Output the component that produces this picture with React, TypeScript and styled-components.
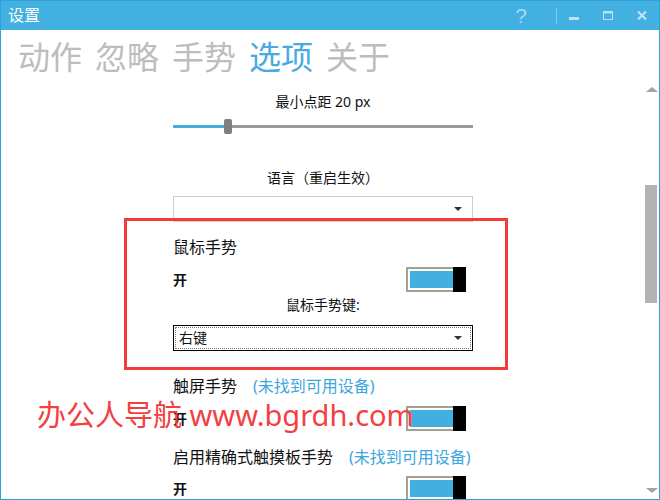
import styled, { createGlobalStyle } from 'styled-components'

const GlobalStyle = createGlobalStyle`
  html, body {
    margin: 0;
    padding: 0;
    background: #ffffff;
  }
  body {
    font-family: "Noto Sans", "Noto Sans CJK SC", sans-serif;
    color: #111;
  }
`

const Window = styled.div`
  position: relative;
  width: 660px;
  height: 500px;
  box-sizing: border-box;
  border: 1px solid #2fa2da;
  display: flex;
  flex-direction: column;
  background: #fff;
  overflow: hidden;
`

const TitleBar = styled.div`
  height: 29px;
  flex: none;
  background: #42b0e0;
  display: flex;
  align-items: center;
`

const Title = styled.div`
  flex: 1;
  padding-left: 7px;
  color: #fff;
  font-size: 16px;
  line-height: 29px;
`

const HelpMark = styled.div`
  width: 30px;
  margin-right: 20px;
  text-align: center;
  color: #a4d8f2;
  font-family: "Liberation Sans", sans-serif;
  font-size: 21px;
  line-height: 29px;
`

const TitleDivider = styled.div`
  width: 1px;
  height: 16px;
  background: #86cbec;
`

const WinButton = styled.div`
  width: 34px;
  height: 29px;
  display: flex;
  align-items: center;
  justify-content: center;
`

const TabBar = styled.div`
  height: 50px;
  flex: none;
  display: flex;
  align-items: center;
  gap: 13px;
  padding-left: 17px;
`

const Tab = styled.div<{ $active?: boolean }>`
  font-family: "Noto Sans CJK SC", sans-serif;
  font-size: 32px;
  line-height: 1;
  color: ${(p) => (p.$active ? '#49a9e2' : '#bdbdbd')};
`

const ScrollArea = styled.div`
  flex: 1;
  display: flex;
  min-height: 0;
`

const Content = styled.div`
  flex: 1;
  overflow: hidden;
`

const Panel = styled.div`
  width: 300px;
  margin: 0 auto;
  padding-top: 12px;
  display: flex;
  flex-direction: column;
`

const CenterLabel = styled.div<{ $gap?: number }>`
  margin-top: ${(p) => p.$gap ?? 0}px;
  text-align: center;
  font-size: 14px;
  line-height: 20px;
`

const Slider = styled.div`
  margin-top: 7px;
  height: 15px;
  display: flex;
  align-items: center;
`

const SliderFill = styled.div`
  height: 3px;
  background: #41b0e0;
`

const SliderThumb = styled.div`
  width: 8px;
  height: 15px;
  border-radius: 2px;
  background: #7f7f7f;
`

const SliderRest = styled.div`
  flex: 1;
  height: 3px;
  background: #999999;
`

const Select = styled.div<{ $focused?: boolean; $gap?: number }>`
  margin-top: ${(p) => p.$gap ?? 0}px;
  height: 26px;
  box-sizing: border-box;
  border: 1px solid ${(p) => (p.$focused ? '#000' : '#cccccc')};
  padding: 1px;
  display: flex;
`

const SelectInner = styled.div<{ $focused?: boolean }>`
  flex: 1;
  display: flex;
  align-items: center;
  padding: 0 8px 0 3px;
  border: 1px ${(p) => (p.$focused ? 'dotted #777' : 'solid transparent')};
`

const SelectText = styled.span`
  flex: 1;
  font-size: 14px;
  line-height: 20px;
`

const Caret = styled.span`
  width: 0;
  height: 0;
  border-left: 4px solid transparent;
  border-right: 4px solid transparent;
  border-top: 4px solid #333;
`

const Highlight = styled.div`
  margin: -4px -35px 0 -49px;
  padding: 16px 32px 16px 46px;
  border: 3px solid #f23b3b;
  display: flex;
  flex-direction: column;
`

const SectionLabel = styled.div<{ $gap?: number }>`
  margin-top: ${(p) => p.$gap ?? 0}px;
  display: flex;
  font-size: 16px;
  line-height: 20px;
`

const Hint = styled.span`
  margin-left: 16px;
  color: #3ca6dd;
`

const SwitchRow = styled.div<{ $gap?: number }>`
  margin-top: ${(p) => p.$gap ?? 0}px;
  height: 25px;
  display: flex;
  align-items: center;
  justify-content: space-between;
  padding-right: 7px;
`

const SwitchText = styled.span`
  font-size: 14px;
  font-weight: bold;
  line-height: 20px;
`

const Switch = styled.div`
  display: flex;
  height: 25px;
`

const SwitchTrack = styled.div`
  width: 47px;
  box-sizing: border-box;
  border: 2px solid #a59f94;
  border-right: none;
  padding: 2px 0 2px 2px;
  background: #fff;
  display: flex;
`

const SwitchFill = styled.div`
  flex: 1;
  background: #41b0e0;
`

const SwitchKnob = styled.div`
  width: 13px;
  background: #000;
`

const ScrollBar = styled.div`
  width: 14px;
  flex: none;
  display: flex;
  flex-direction: column;
`

const ScrollButton = styled.div`
  height: 18px;
  display: flex;
  align-items: center;
  padding-left: 1px;
`

const Arrow = styled.span<{ $down?: boolean }>`
  width: 0;
  height: 0;
  border-left: 6px solid transparent;
  border-right: 6px solid transparent;
  ${(p) => (p.$down ? 'border-top: 5px solid #a3a3a3;' : 'border-bottom: 5px solid #a3a3a3;')}
`

const ScrollTrack = styled.div`
  flex: 1;
`

const ScrollThumb = styled.div`
  margin-top: 87px;
  width: 12px;
  height: 118px;
  background: #b3b3b3;
`

const Watermark = styled.div`
  position: absolute;
  left: 36px;
  top: 396px;
  color: #f23f3f;
  font-family: "Noto Sans", "Noto Sans CJK SC", sans-serif;
  font-size: 29px;
  line-height: 36px;
  white-space: nowrap;
  pointer-events: none;
`

const Toggle = () => (
  <Switch>
    <SwitchTrack>
      <SwitchFill />
    </SwitchTrack>
    <SwitchKnob />
  </Switch>
)

const tabs = ['动作', '忽略', '手势', '选项', '关于']

export default function App() {
  const minDistance = 20
  const sliderMax = 118

  return (
    <>
      <GlobalStyle />
      <Window>
        <TitleBar>
          <Title>设置</Title>
          <HelpMark>?</HelpMark>
          <TitleDivider />
          <WinButton>
            <svg width="10" height="10" viewBox="0 0 10 10">
              <rect x="0" y="6" width="10" height="3" fill="#b9e2f5" />
            </svg>
          </WinButton>
          <WinButton>
            <svg width="10" height="9" viewBox="0 0 10 9">
              <rect x="0.5" y="0.5" width="9" height="8" fill="none" stroke="#b9e2f5" />
              <rect x="0" y="0" width="10" height="2.5" fill="#b9e2f5" />
            </svg>
          </WinButton>
          <WinButton>
            <svg width="10" height="9" viewBox="0 0 10 9">
              <path d="M1 0.5 L9 8.5 M9 0.5 L1 8.5" stroke="#c4e6f7" strokeWidth="2" />
            </svg>
          </WinButton>
        </TitleBar>

        <TabBar>
          {tabs.map((t) => (
            <Tab key={t} $active={t === '选项'}>
              {t}
            </Tab>
          ))}
        </TabBar>

        <ScrollArea>
          <Content>
            <Panel>
              <CenterLabel>最小点距 {minDistance} px</CenterLabel>
              <Slider>
                <SliderFill style={{ width: `${Math.round((minDistance / sliderMax) * 300)}px` }} />
                <SliderThumb />
                <SliderRest />
              </Slider>

              <CenterLabel $gap={34}>语言（重启生效）</CenterLabel>
              <Select $gap={8}>
                <SelectInner>
                  <SelectText />
                  <Caret />
                </SelectInner>
              </Select>

              <Highlight>
                <SectionLabel>鼠标手势</SectionLabel>
                <SwitchRow $gap={10}>
                  <SwitchText>开</SwitchText>
                  <Toggle />
                </SwitchRow>
                <CenterLabel $gap={3}>鼠标手势键:</CenterLabel>
                <Select $focused $gap={10}>
                  <SelectInner $focused>
                    <SelectText>右键</SelectText>
                    <Caret />
                  </SelectInner>
                </Select>
              </Highlight>

              <SectionLabel $gap={6}>
                触屏手势<Hint>(未找到可用设备)</Hint>
              </SectionLabel>
              <SwitchRow $gap={10}>
                <SwitchText>开</SwitchText>
                <Toggle />
              </SwitchRow>

              <SectionLabel $gap={16}>
                启用精确式触摸板手势<Hint>(未找到可用设备)</Hint>
              </SectionLabel>
              <SwitchRow $gap={9}>
                <SwitchText>开</SwitchText>
                <Toggle />
              </SwitchRow>
            </Panel>
          </Content>

          <ScrollBar>
            <ScrollButton>
              <Arrow />
            </ScrollButton>
            <ScrollTrack>
              <ScrollThumb />
            </ScrollTrack>
            <ScrollButton>
              <Arrow $down />
            </ScrollButton>
          </ScrollBar>
        </ScrollArea>

        <Watermark>办公人导航 www.bgrdh.com</Watermark>
      </Window>
    </>
  )
}
